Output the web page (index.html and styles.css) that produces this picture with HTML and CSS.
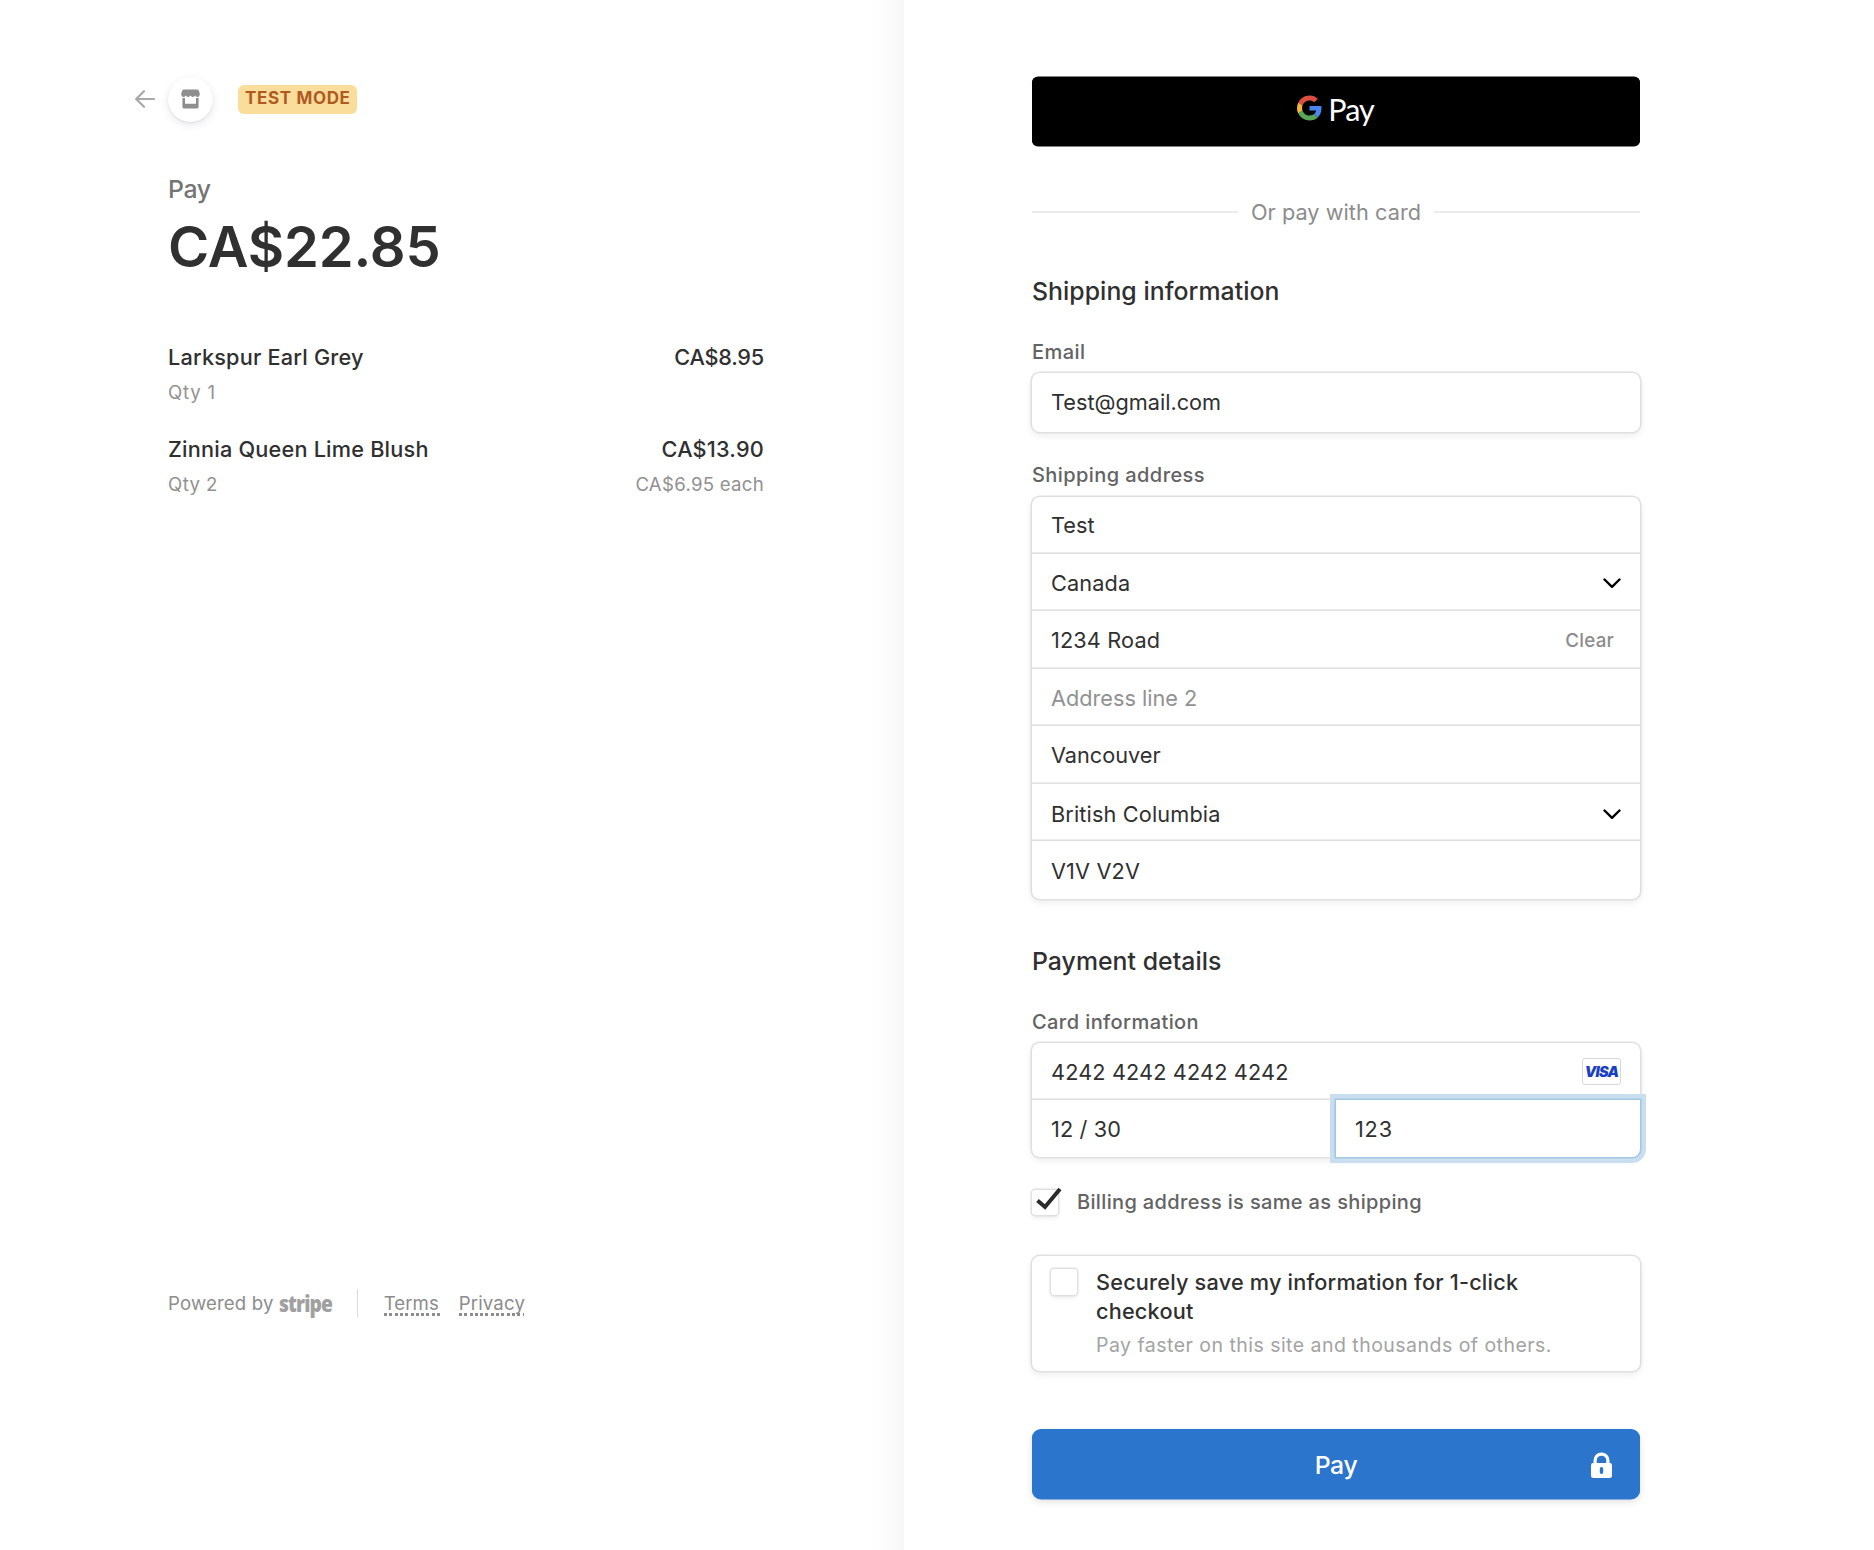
FILE: index.html
```html
<!DOCTYPE html>
<html lang="en">
<head>
<meta charset="utf-8">
<title>Checkout</title>
<link rel="stylesheet" href="styles.css">
</head>
<body>
<div class="checkout">
  <section class="summary">
    <header class="merchant">
      <svg class="back" viewBox="0 0 20 18" aria-hidden="true"><path d="M19 9H1.500M9 1.200 1.200 9 9 16.800"/></svg>
      <span class="store"><svg viewBox="0 0 20 20" aria-hidden="true"><path d="M3 0h14a2 2 0 0 1 1.700 1l1 3v1.500a2.500 2.500 0 0 1-4.800.9 2.700 2.700 0 0 1-4.900 0 2.700 2.700 0 0 1-4.900 0A2.500 2.500 0 0 1 .3 5.500V4l1-3A2 2 0 0 1 3 0zM1.500 9h2.700v6h11.600V9h2.700v9.500a1.500 1.500 0 0 1-1.500 1.500h-14a1.500 1.500 0 0 1-1.500-1.500z"/></svg></span>
      <span class="badge">TEST MODE</span>
    </header>
    <p class="pay-label">Pay</p>
    <p class="amount">CA$22.85</p>
    <ul class="items">
      <li>
        <div class="line name"><span>Larkspur Earl Grey</span><span class="track-tight">CA$8.95</span></div>
        <div class="line meta"><span class="track-wide">Qty 1</span></div>
      </li>
      <li>
        <div class="line name"><span>Zinnia Queen Lime Blush</span><span>CA$13.90</span></div>
        <div class="line meta"><span class="track-loose">Qty 2</span><span>CA$6.95 each</span></div>
      </li>
    </ul>
    <footer class="footer">
      <span>Powered by</span><span class="stripe">stripe</span>
      <i class="rule"></i>
      <a class="link terms">Terms</a><a class="link privacy">Privacy</a>
    </footer>
  </section>
  <main class="form">
    <div class="gpay">
      <svg viewBox="0 0 48 48" aria-hidden="true"><path fill="#db4f41" d="M24 9.500c3.540 0 6.710 1.220 9.210 3.600l6.850-6.850C35.900 2.380 30.470 0 24 0 14.620 0 6.510 5.380 2.560 13.220l7.980 6.190C12.430 13.720 17.740 9.500 24 9.500z"/><path fill="#4a85ee" d="M46.980 24.550c0-1.570-.15-3.090-.38-4.550H24v9.020h12.940c-.58 2.960-2.260 5.480-4.780 7.180l7.730 6c4.510-4.180 7.090-10.360 7.090-17.650z"/><path fill="#f2b63c" d="M10.530 28.590c-.48-1.450-.76-2.990-.76-4.590s.27-3.140.76-4.590l-7.980-6.190C.92 16.460 0 20.120 0 24c0 3.880.92 7.540 2.560 10.780l7.970-6.190z"/><path fill="#59a659" d="M24 48c6.480 0 11.930-2.130 15.890-5.810l-7.730-6c-2.150 1.450-4.920 2.300-8.160 2.300-6.260 0-11.570-4.220-13.470-9.910l-7.980 6.190C6.510 42.620 14.620 48 24 48z"/></svg>
      <span>Pay</span>
    </div>
    <div class="or">Or pay with card</div>

    <h2 class="h">Shipping information</h2>
    <div class="label">Email</div>
    <div class="group email"><div class="row">Test@gmail.com</div></div>
    <div class="label address">Shipping address</div>
    <div class="group addr">
      <div class="row">Test</div>
      <div class="row"><span class="track-mid">Canada</span><svg class="chev" viewBox="0 0 18 11" aria-hidden="true"><path d="m1.500 1.500 7.500 7.300 7.500-7.300"/></svg></div>
      <div class="row tall"><span class="track-mid">1234 Road</span><span class="clear">Clear</span></div>
      <div class="row"><span class="placeholder">Address line 2</span></div>
      <div class="row tall">Vancouver</div>
      <div class="row low"><span class="track-mid">British Columbia</span><svg class="chev" viewBox="0 0 18 11" aria-hidden="true"><path d="m1.500 1.500 7.500 7.300 7.500-7.300"/></svg></div>
      <div class="row tall low"><span class="track-mid">V1V V2V</span></div>
    </div>

    <h2 class="h payment">Payment details</h2>
    <div class="label">Card information</div>
    <div class="group card">
      <div class="row"><span class="track-mid">4242 4242 4242 4242</span><span class="visa">VISA</span></div>
      <div class="split">
        <div class="row"><span class="track-mid">12 / 30</span></div>
        <div class="row focus"><span class="track-wide">123</span></div>
      </div>
    </div>

    <div class="same">
      <span class="box"><svg viewBox="0 0 26 23" aria-hidden="true"><path d="m1.500 13.500 7.500 6.500L24 2"/></svg></span>
      <span>Billing address is same as shipping</span>
    </div>

    <div class="group save">
      <span class="box"></span>
      <div>
        <div class="save-title">Securely save my information for 1-click<br>checkout</div>
        <div class="save-sub">Pay faster on this site and thousands of others.</div>
      </div>
    </div>

    <div class="pay"><span>Pay</span>
      <svg viewBox="0 0 21 26" aria-hidden="true"><path fill-rule="evenodd" d="M2.500 11V8.500a8 8 0 0 1 16 0V11a2.300 2.300 0 0 1 2.500 2.300V23.500a2.500 2.500 0 0 1-2.500 2.500h-16A2.500 2.500 0 0 1 0 23.500V13.300A2.300 2.300 0 0 1 2.500 11zM5.700 11h9.600V8.500a4.800 4.800 0 0 0-9.600 0zM10.500 15a1.700 1.700 0 0 0-1.700 1.700v3.500a1.700 1.700 0 0 0 3.400 0v-3.500a1.700 1.700 0 0 0-1.700-1.700z"/></svg>
    </div>
  </main>
</div>
</body>
</html>
```
FILE: styles.css
```css
* { box-sizing: border-box; margin: 0; padding: 0; }
body {
  background: #fff;
  color: #303030;
  font-family: Inter, "Liberation Sans", sans-serif;
  font-size: 21.7px;
}
.checkout { display: flex; width: 1874px; height: 1550px; overflow: hidden; }

/* Tracking adjustments */
.track-tight { letter-spacing: -.22px; }
.track-mid { letter-spacing: .14px; }
.track-loose { letter-spacing: .42px; }
.track-wide { letter-spacing: .8px; }

/* Order summary */
.summary {
  display: flex;
  flex-direction: column;
  width: 904px;
  padding: 76px 140px 0 168px;
  background: linear-gradient(to left, #f7f7f7, #fdfdfd 22px, #fff 34px);
}
.merchant { display: flex; align-items: center; height: 46px; margin-left: -33px; }
.back { width: 20px; height: 18px; fill: none; stroke: #a8a8a8; stroke-width: 2.2; stroke-linecap: round; stroke-linejoin: round; }
.store {
  display: flex;
  align-items: center;
  justify-content: center;
  width: 45px;
  height: 45px;
  margin-left: 13px;
  border-radius: 50%;
  background: #fff;
  box-shadow: 0 3px 8px rgba(60, 66, 87, .12), 0 1px 2px rgba(0, 0, 0, .08);
}
.store svg { width: 19px; height: 20px; fill: #8e8e8e; }
.badge {
  display: flex;
  align-items: center;
  width: 119px;
  height: 29px;
  margin-left: 25px;
  padding-left: 7px;
  padding-bottom: 2px;
  border-radius: 6px;
  background: #fbdd9b;
  color: #b05a22;
  font-size: 17px;
  font-weight: 700;
  letter-spacing: .65px;
  white-space: nowrap;
}
.pay-label { margin-top: 51px; color: #757575; font-size: 24.8px; font-weight: 500; letter-spacing: -.4px; line-height: 32px; }
.amount { margin-top: 8px; font-size: 56px; font-weight: 600; letter-spacing: -.15px; line-height: 68px; }
.items { margin-top: 60px; list-style: none; }
.items li { height: 92px; }
.line { display: flex; justify-content: space-between; }
.name { font-weight: 500; letter-spacing: .2px; line-height: 32px; }
.meta { margin-top: 5px; color: #919191; font-size: 18.6px; letter-spacing: .28px; line-height: 28px; }
.footer { display: flex; align-items: center; height: 28px; margin-top: 764px; color: #8c8c8c; font-size: 18.6px; letter-spacing: .17px; line-height: 28px; }
.stripe {
  width: 52px;
  margin-left: 5px;
  color: #a0a0a0;
  font: 800 22px/28px "Open Sans", sans-serif;
  letter-spacing: -1px;
  transform: scaleX(.875);
  transform-origin: left;
}
.rule { width: 1px; height: 28px; margin: 0 26px; background: #dcdcdc; }
.link { height: 28px; background: repeating-linear-gradient(to right, #8c8c8c 0 3px, transparent 3px 5.3px) 0 24px / 100% 3px no-repeat; }
.terms { width: 56px; letter-spacing: .1px; }
.privacy { margin-left: 19px; width: 65px; }

/* Payment form */
.form { width: 608px; margin-left: 128px; padding-top: 77px; }
.gpay {
  display: flex;
  align-items: center;
  justify-content: center;
  height: 69px;
  padding: 0 1px 5px 0;
  border-radius: 6px;
  background: #000;
  box-shadow: 0 -.5px 0 #000, 0 .4px 0 #000;
  color: #fff;
  font: 400 30.5px/36px Lato, sans-serif;
  letter-spacing: -1px;
}
.gpay svg { width: 25px; height: 26px; margin: -2px 6px 0 0; }
.or { display: flex; align-items: center; gap: 13px; margin-top: 51px; color: #8c8c8c; letter-spacing: .05px; line-height: 30px; }
.or::before, .or::after { content: ""; flex: 1; height: 2px; margin-top: -1px; background: #ebebeb; }
.h { margin-top: 48px; font-size: 24.8px; font-weight: 500; letter-spacing: .05px; line-height: 32px; }
.payment { margin-top: 46px; }
.label { margin-top: 31px; color: #636363; font-size: 20px; font-weight: 500; letter-spacing: .42px; line-height: 28px; }
.address { margin-top: 29px; }
.group {
  border-radius: 8px;
  background: #fff;
  box-shadow: 0 0 0 1.6px #e0e0e0, 0 3px 7px 1px rgba(0, 0, 0, .07);
}
.email { margin-top: 7px; }
.email .row { height: 59px; padding-bottom: 2px; }
.addr { margin-top: 8px; }
.card { margin-top: 7px; }
.row { display: flex; align-items: center; justify-content: space-between; height: 57px; padding: 0 19px; }
.addr .row:first-child { padding-bottom: 1px; }
.tall { height: 58px; }
.low { padding-top: 2px; }
.addr .row + .row, .split .row:first-child { box-shadow: 0 -1.6px 0 #e0e0e0; }
.placeholder { color: #919191; }
.clear { margin-right: 7px; color: #8c8c8c; font-size: 18.8px; font-weight: 500; letter-spacing: .2px; }
.chev { width: 18px; height: 11px; margin-top: 2px; fill: none; stroke: #000; stroke-width: 2.4; stroke-linecap: round; stroke-linejoin: round; }
.visa {
  display: flex;
  align-items: center;
  justify-content: center;
  width: 39px;
  height: 27px;
  border: 1px solid #d8d8d8;
  border-radius: 3px;
  color: #1a3fc4;
  font: italic 900 14.5px/20px Inter, sans-serif;
  letter-spacing: -.7px;
}
.split { display: grid; grid-template-columns: 304px 304px; }
.focus {
  position: relative;
  border-radius: 0 0 8px 0;
  background: #fff;
  box-shadow: 0 0 0 1.6px #a3c8e4, 0 0 0 6px #c9dff0;
}
.box { flex: none; width: 26px; height: 26px; border-radius: 3px; background: #fff; box-shadow: 0 0 0 1.4px #e0e0e0, 0 3px 5px rgba(0, 0, 0, .08); }
.same { display: flex; align-items: center; gap: 19px; height: 28px; margin-top: 31px; color: #636363; font-size: 20px; font-weight: 500; letter-spacing: .35px; line-height: 28px; }
.same .box { height: 25px; margin-top: 1px; }
.same svg { display: block; width: 26px; height: 23px; margin: -3px 0 0 4px; fill: none; stroke: #2b2b2b; stroke-width: 4; }
.save { display: flex; gap: 19px; height: 115px; margin-top: 40px; padding: 12px 19px 0; }
.save .box { margin-top: 1px; }
.save-title { font-weight: 500; letter-spacing: .19px; line-height: 29px; white-space: nowrap; }
.save-sub { margin-top: 5px; color: #a3a3a3; font-size: 19.5px; letter-spacing: .47px; line-height: 28px; white-space: nowrap; }
.pay {
  display: grid;
  grid-template-columns: 1fr auto 1fr;
  align-items: center;
  height: 70px;
  margin-top: 58px;
  padding: 2px 28px 0;
  border-radius: 9px;
  background: #2b75cc;
  box-shadow: 0 .4px 0 #2b75cc, 0 3px 7px rgba(0, 0, 0, .12);
  color: #fff;
  font-size: 24.8px;
  font-weight: 500;
  letter-spacing: -.4px;
}
.pay span { grid-column: 2; }
.pay svg { justify-self: end; width: 21px; height: 26px; margin-top: -1px; fill: #fff; }
```
